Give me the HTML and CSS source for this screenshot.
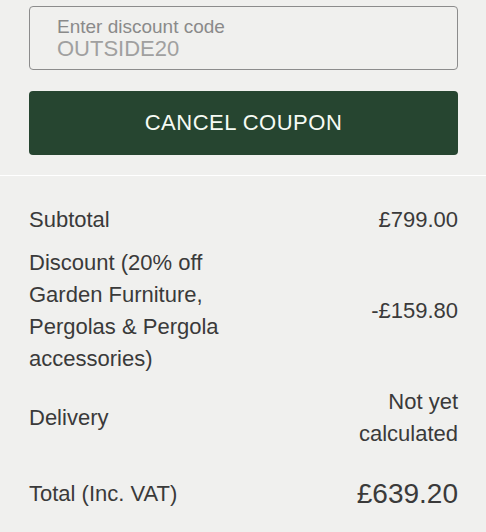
FILE: index.html
```html
<!DOCTYPE html>
<html lang="en">
<head>
<meta charset="utf-8">
<title>Basket summary</title>
<link rel="stylesheet" href="styles.css">
</head>
<body>
<div class="summary">
  <section class="coupon">
    <label class="code-field">
      <span class="code-label">Enter discount code</span>
      <input class="code-input" type="text" value="OUTSIDE20" readonly>
    </label>
    <button class="btn-cancel" type="button">CANCEL COUPON</button>
  </section>

  <section class="totals">
    <div class="row">
      <div class="label">Subtotal</div>
      <div class="value">£799.00</div>
    </div>
    <div class="row">
      <div class="label">Discount (20% off Garden Furniture, Pergolas &amp; Pergola accessories)</div>
      <div class="value">-£159.80</div>
    </div>
    <div class="row">
      <div class="label">Delivery</div>
      <div class="value">Not yet calculated</div>
    </div>
    <div class="row row-total">
      <div class="label">Total (Inc. VAT)</div>
      <div class="value">£639.20</div>
    </div>
  </section>
</div>
</body>
</html>
```

FILE: styles.css
```css
html, body {
  margin: 0;
  padding: 0;
  background: #f0f0ee;
}

body {
  font-family: "Liberation Sans", Arial, sans-serif;
  color: #3a3a3a;
}

.summary {
  width: 486px;
}

/* coupon entry */
.coupon {
  padding: 6px 28px 20px 29px;
  border-bottom: 1px solid #ffffff;
  display: flex;
  flex-direction: column;
  gap: 21px;
}

.code-field {
  display: flex;
  flex-direction: column;
  border: 1px solid #8c8c8c;
  border-radius: 4px;
  padding: 9px 0 9px 27px;
}

.code-label {
  font-size: 19px;
  line-height: 22px;
  color: #8a8a8a;
}

.code-input {
  border: none;
  outline: none;
  background: transparent;
  padding: 0;
  margin: 0;
  height: 22px;
  font-family: inherit;
  font-size: 22px;
  line-height: 22px;
  color: #a0a0a0;
}

.btn-cancel {
  height: 64px;
  border: none;
  border-radius: 4px;
  background: #264530;
  color: #f6fbf4;
  font-family: inherit;
  font-size: 22px;
  letter-spacing: 0.5px;
  cursor: pointer;
}

/* order totals */
.totals {
  padding: 28px 28px 0 29px;
  display: flex;
  flex-direction: column;
  gap: 11px;
}

.row {
  display: grid;
  grid-template-columns: 1fr 150px;
  align-items: center;
  font-size: 22px;
  line-height: 32px;
}

.row .label {
  max-width: 228px;
}

.row .value {
  text-align: right;
}

.row-total {
  margin-top: 17px;
}

.row-total .value {
  font-size: 28px;
}
```
